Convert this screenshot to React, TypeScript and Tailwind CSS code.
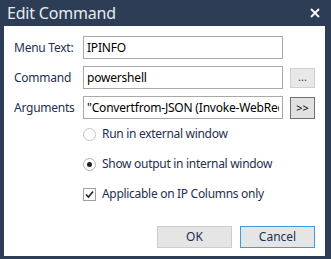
import React from 'react';

const font = { fontFamily: '"Noto Sans", "Open Sans", sans-serif' };

function Field({ label, value, button }: { label: string; value: string; button?: React.ReactNode }) {
  return (
    <div className="flex items-center h-[23px]">
      <div className="w-[69px] text-[12px] tracking-[-0.25px] text-[#1e3050] shrink-0">{label}</div>
      <input
        readOnly
        value={value}
        className="w-[200px] h-[23px] border border-[#a9a9a9] px-[3px] text-[12px] tracking-[-0.2px] text-black outline-none bg-white"
      />
      {button}
    </div>
  );
}

export default function App() {
  return (
    <div className="w-[331px] h-[259px] bg-[#2c3d55] flex flex-col" style={font}>
      <div className="h-[26px] flex items-center justify-between pl-[7px] pr-[11px] shrink-0">
        <span className="text-[16px] tracking-[-0.2px] text-[#e6ebf1]">Edit Command</span>
        <svg width="10" height="10" viewBox="0 0 10 10">
          <path d="M1 1L9 9M9 1L1 9" stroke="#ffffff" strokeWidth="1.8" />
        </svg>
      </div>
      <div className="ml-[4px] mr-[6px] mb-[3px] flex-1 bg-white flex flex-col pl-[10px] pr-[10px] pt-[10px] pb-[8px]">
        <div className="flex flex-col gap-[7px]">
          <Field label="Menu Text:" value="IPINFO" />
          <Field
            label="Command"
            value="powershell"
            button={
              <button className="ml-[7px] w-[25px] h-[20px] border border-[#cfcfcf] bg-[#e8e8e8] text-[11px] text-[#333] leading-none pb-[2px]">
                ...
              </button>
            }
          />
          <Field
            label="Arguments"
            value={'"Convertfrom-JSON (Invoke-WebRequest -Uri http://ipinfo.io/%ip%).Content"'}
            button={
              <button className="ml-[7px] w-[25px] h-[22px] border border-[#707070] bg-[#e1e1e1] text-[11px] text-black leading-none">
                &gt;&gt;
              </button>
            }
          />
        </div>
        <div className="flex flex-col gap-[10px] mt-[5px] pl-[69px] text-[12px] tracking-[-0.3px] text-[#1e3050]">
          <div className="h-[20px] flex items-center gap-[6px]">
            <span className="w-[13px] h-[13px] rounded-full border border-[#c4c4c4] bg-white" />
            <span>Run in external window</span>
          </div>
          <div className="h-[20px] flex items-center gap-[6px]">
            <span className="w-[13px] h-[13px] rounded-full border border-[#b0b0b0] bg-white flex items-center justify-center">
              <span className="w-[5px] h-[5px] rounded-full bg-[#222]" />
            </span>
            <span>Show output in internal window</span>
          </div>
          <div className="h-[20px] flex items-center gap-[6px]">
            <span className="w-[13px] h-[13px] border border-[#a0a0a0] bg-white flex items-center justify-center">
              <svg width="9" height="9" viewBox="0 0 9 9">
                <path d="M1 4.5L3.5 7L8 1.5" stroke="#222" strokeWidth="1.6" fill="none" />
              </svg>
            </span>
            <span>Applicable on IP Columns only</span>
          </div>
        </div>
        <div className="mt-auto flex justify-end gap-[8px]">
          <button className="w-[75px] h-[22px] border border-[#cccccc] bg-[#e5e5e5] text-[12px] text-[#1e3050]">OK</button>
          <button className="w-[75px] h-[22px] border border-[#3d9ce6] bg-[#e5e5e5] text-[12px] text-[#1e3050]">Cancel</button>
        </div>
      </div>
    </div>
  );
}
